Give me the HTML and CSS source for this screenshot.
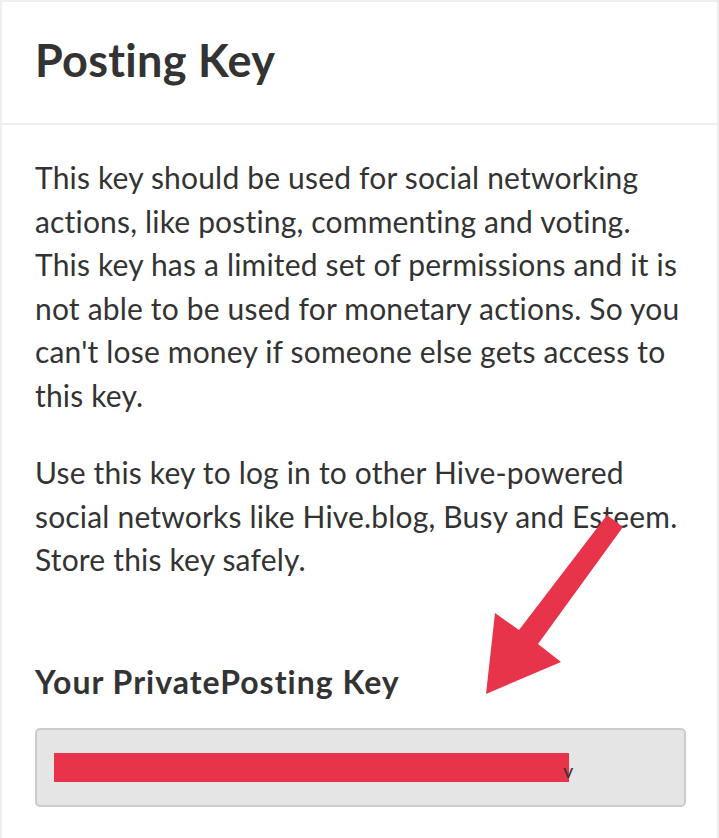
FILE: index.html
```html
<!DOCTYPE html>
<html lang="en">

<head>
    <meta charset="UTF-8" />
    <meta name="viewport" content="width=device-width, initial-scale=1.0" />
    <title>Posting Key</title>
    <link rel="stylesheet" href="styles.css">
</head>

<body>
    <div class="card">
        <div class="card-header">
            <h2 class="card-title">Posting Key</h2>
        </div>
        <div class="card-body">
            <p>This key should be used for social networking actions, like posting, commenting and voting. This key has a limited set of permissions and it is not able to be used for monetary actions. So you can't lose money if someone else gets access to this key.</p>
            <p>Use this key to log in to other Hive-powered social networks like Hive.blog, Busy and Esteem. Store this key safely.</p>

            <h3 class="key-label">Your PrivatePosting Key</h3>
            <div class="key-field">
                <span class="redact"></span><span class="key-tail">v</span>
            </div>
        </div>

        <!-- annotation arrow pointing at the key -->
        <svg class="arrow" width="719" height="838" viewBox="0 0 719 838">
            <polygon points="607,515 623,527 538,644 561,662 486,694 495,613 519,630" fill="#e8344a" />
        </svg>
    </div>
</body>

</html>
```

FILE: styles.css
```css
:root {
    --text: #333333;
    --border: #eeeeee;
    --field-bg: #e5e5e5;
    --field-border: #cccccc;
    --red: #e8344a;
}

* {
    margin: 0;
    padding: 0;
    box-sizing: border-box;
}

body {
    background: #ffffff;
    color: var(--text);
    font-family: 'Lato', sans-serif;
}

.card {
    position: relative;
    border: 2px solid var(--border);
    border-bottom: none;
    min-height: 838px;
}

.card-header {
    padding: 31px 33px 36px;
    border-bottom: 2px solid var(--border);
}

.card-title {
    font-size: 45px;
    line-height: 1.2;
    font-weight: 700;
    letter-spacing: 0.3px;
}

.card-body {
    padding: 31px 33px 0;
}

.card-body p {
    font-size: 30px;
    line-height: 43.5px;
    letter-spacing: 0.18px;
    max-width: 660px;
    margin-bottom: 34px;
}

.key-label {
    font-size: 32px;
    line-height: 43.5px;
    font-weight: 700;
    letter-spacing: 1px;
    margin-top: 78px;
    margin-bottom: 25px;
}

.key-field {
    width: 651px;
    height: 79px;
    background: var(--field-bg);
    border: 2px solid var(--field-border);
    border-radius: 5px;
    display: flex;
    align-items: center;
    padding-left: 17px;
}

.redact {
    display: inline-block;
    width: 515px;
    height: 29px;
    background: var(--red);
}

.key-tail {
    font-size: 20px;
    margin-left: -6px;
    margin-top: 4px;
}

.arrow {
    position: absolute;
    top: -2px;
    left: -2px;
    pointer-events: none;
}
```
